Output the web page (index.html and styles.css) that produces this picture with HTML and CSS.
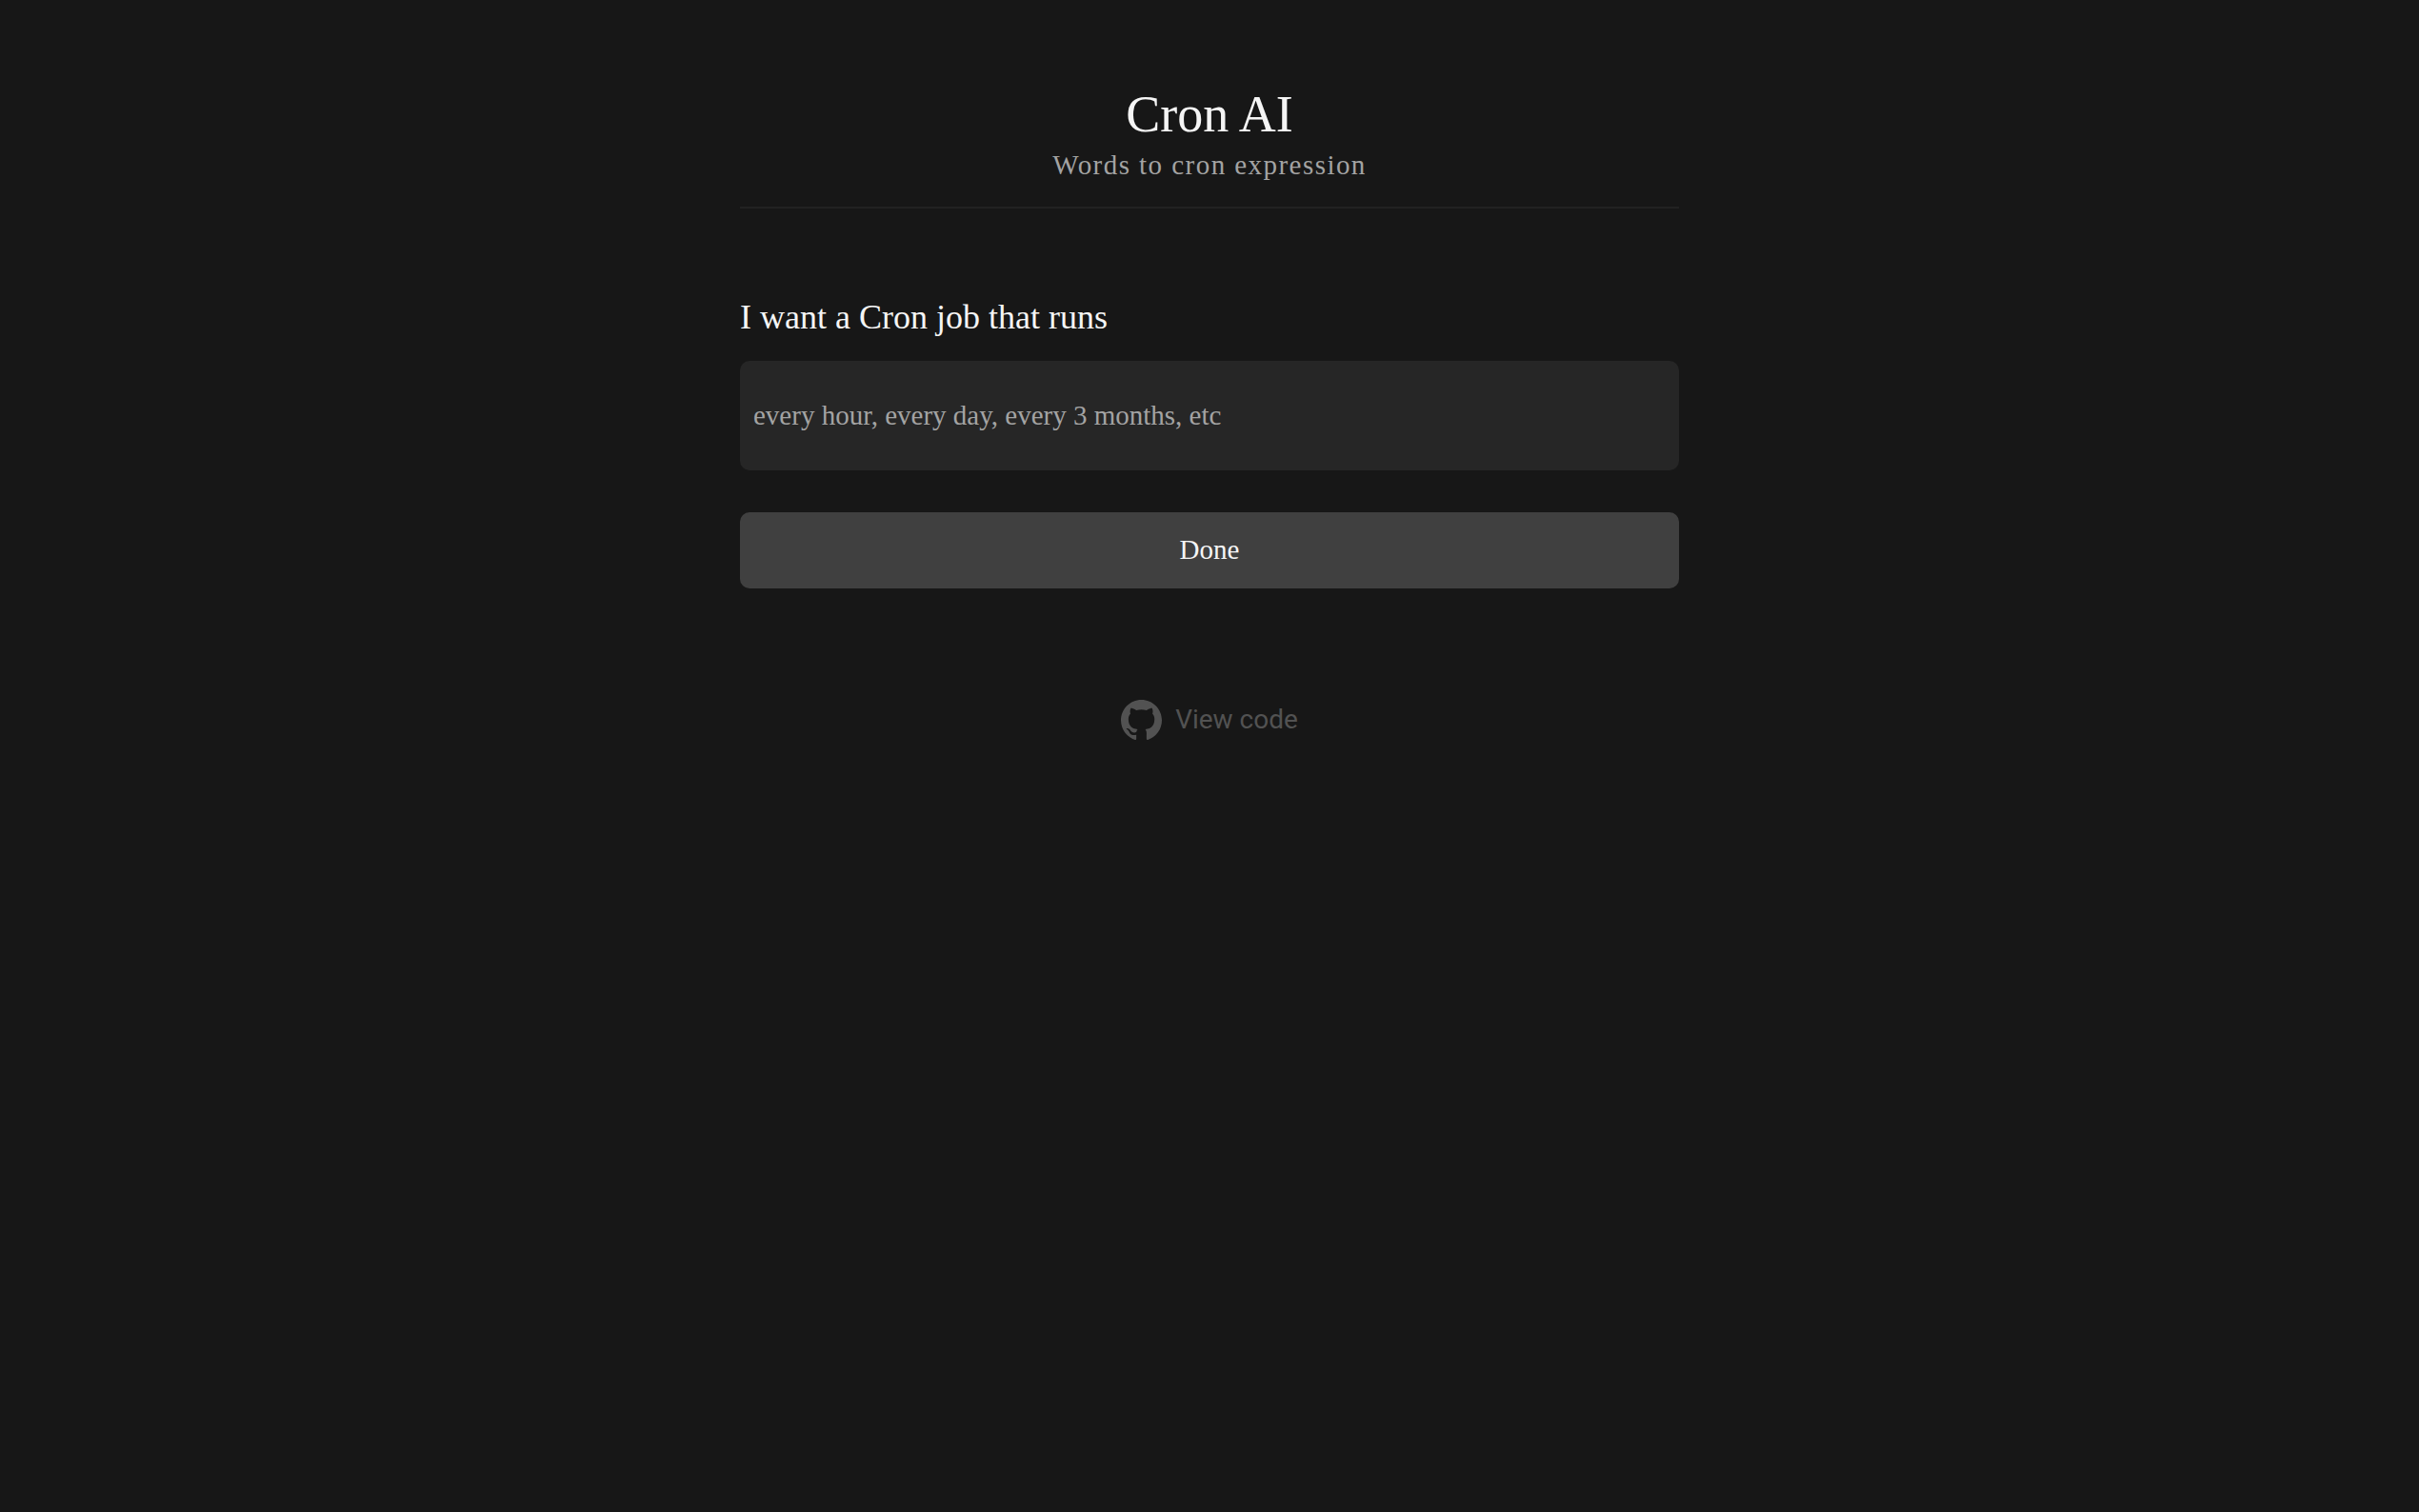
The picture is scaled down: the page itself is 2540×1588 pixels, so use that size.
FILE: index.html
```html
<!DOCTYPE html>
<html lang="en">
<head>
    <meta charset="UTF-8">
    <meta name="viewport" content="width=device-width, initial-scale=1.0">
    <title>Cron AI</title>
    <link rel="stylesheet" href="styles.css">
</head>
<body>
    <div class="container">
        <header class="header">
            <h1>Cron AI</h1>
            <p>Words to cron expression</p>
        </header>

        <main>
            <form id="cronForm">
                <label for="schedule">I want a Cron job that runs</label>
                <input type="text" id="schedule" name="schedule" placeholder="every hour, every day, every 3 months, etc" autocomplete="off">
                <button type="submit" class="btn">Done</button>
            </form>
        </main>

        <footer class="footer">
            <a href="#" class="code-link">
                <svg class="icon" viewBox="0 0 16 16" aria-hidden="true">
                    <path fill="currentColor" d="M8 0C3.58 0 0 3.58 0 8c0 3.54 2.29 6.53 5.47 7.59.4.07.55-.17.55-.38 0-.19-.01-.82-.01-1.49-2.01.37-2.53-.49-2.69-.94-.09-.23-.48-.94-.82-1.13-.28-.15-.68-.52-.01-.53.63-.01 1.08.58 1.23.82.72 1.21 1.87.87 2.33.66.07-.52.28-.87.51-1.07-1.78-.2-3.64-.89-3.64-3.95 0-.87.31-1.59.82-2.15-.08-.2-.36-1.02.08-2.12 0 0 .67-.21 2.2.82.64-.18 1.32-.27 2-.27s1.36.09 2 .27c1.53-1.04 2.2-.82 2.2-.82.44 1.1.16 1.92.08 2.12.51.56.82 1.27.82 2.15 0 3.07-1.87 3.75-3.65 3.95.29.25.54.73.54 1.48 0 1.07-.01 1.93-.01 2.2 0 .21.15.46.55.38A8.01 8.01 0 0 0 16 8c0-4.42-3.58-8-8-8z"/>
                </svg>
                <span>View code</span>
            </a>
        </footer>
    </div>

    <script>
        document.getElementById('cronForm').addEventListener('submit', function(e) {
            e.preventDefault();
        });
    </script>
</body>
</html>
```
FILE: styles.css
```css
* {
    margin: 0;
    padding: 0;
    box-sizing: border-box;
}

body {
    background-color: #171717;
    color: #f5f5f5;
    font-family: 'Liberation Serif', 'Times New Roman', serif;
}

.container {
    max-width: 1014px;
    margin: 0 auto;
    padding: 88px 14px;
}

.header {
    text-align: center;
    padding-bottom: 24px;
    border-bottom: 2px solid #222;
    margin-bottom: 88px;
}

.header h1 {
    font-size: 54px;
    font-weight: normal;
    line-height: 65px;
}

.header p {
    color: #a3a3a3;
    font-size: 29px;
    line-height: 40px;
    letter-spacing: 0.05em;
}

form {
    display: flex;
    flex-direction: column;
}

label {
    font-size: 36px;
    line-height: 52px;
    margin-bottom: 20px;
}

input {
    width: 100%;
    height: 115px;
    padding: 0 14px;
    margin-bottom: 44px;
    background: #262626;
    color: #f5f5f5;
    border: none;
    border-radius: 10px;
    font-family: inherit;
    font-size: 29px;
}

input::placeholder {
    color: #a3a3a3;
    opacity: 1;
}

input:focus {
    outline: 2px solid #525252;
}

.btn {
    width: 100%;
    height: 80px;
    padding-bottom: 2px;
    background: #404040;
    color: #f5f5f5;
    border: none;
    border-radius: 10px;
    font-family: inherit;
    font-size: 29px;
    cursor: pointer;
}

.btn:hover {
    background: #525252;
}

.footer {
    display: flex;
    justify-content: center;
    margin-top: 116px;
}

.code-link {
    display: flex;
    align-items: center;
    gap: 14px;
    color: #525252;
    font-family: Roboto, sans-serif;
    font-size: 28px;
    line-height: 44px;
    text-decoration: none;
}

.code-link:hover {
    color: #a3a3a3;
}

.icon {
    width: 43px;
    height: 43px;
}
```
